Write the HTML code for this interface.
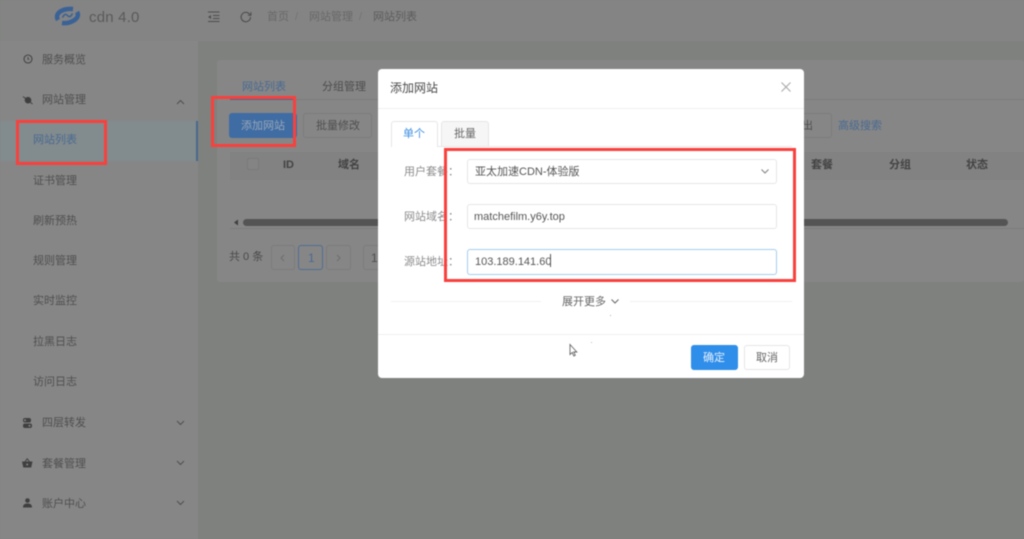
<!DOCTYPE html>
<html lang="zh-CN">
<head>
<meta charset="utf-8">
<title>添加网站</title>
<style>
html,body{margin:0;padding:0;width:1024px;height:539px;overflow:hidden;background:#7f817f}
body{font-family:"Liberation Sans","Noto Sans CJK SC",sans-serif;font-size:11px;color:#4a4a4a;position:relative}
#root{position:absolute;left:0;top:0;width:1024px;height:539px;filter:blur(.45px)}
.a{position:absolute;white-space:nowrap;line-height:1;margin-top:1px}
.n{margin-top:0}
.box{position:absolute;box-sizing:border-box}
.m{color:#4f4f4f;font-size:11px}
.r{position:absolute;box-sizing:border-box;border:3px solid #f9403d}
svg{position:absolute;overflow:visible}
</style>
</head>
<body>
<div id="root">
  <div class="box" style="left:0;top:0;width:1024px;height:41px;background:#848484"></div>
  <div class="box" style="left:0;top:41px;width:198px;height:498px;background:#868686"></div>
  <div class="box" style="left:198px;top:41px;width:826px;height:498px;background:#7f817f"></div>
  <div class="box" style="left:217px;top:60px;width:807px;height:222px;background:#868686;border-radius:3px"></div>

  <!-- logo -->
  <svg style="left:55px;top:6px" width="25" height="20" viewBox="0 0 25 20" fill="none" stroke="#3a6296">
    <path d="M3 14C-1 7 8 2 18 3" stroke-width="4.500"/>
    <path d="M22 6C26 12 16 18 7 17" stroke-width="4.500"/>
    <path d="M7.500 11.500q2.500-5 5-2t5-2" stroke-width="1.600"/>
  </svg>
  <div class="a n" style="left:89px;top:10px;font-size:15px;color:#5a5a5a;letter-spacing:.2px">cdn 4.0</div>

  <!-- header icons -->
  <svg style="left:208px;top:11px" width="12" height="12" viewBox="0 0 12 12" fill="none" stroke="#4d4d4d" stroke-width="1.1"><path d="M0 1h11.500M5 4.500h6.500M5 7.500h6.500M0 10.500h11.500"/><path d="M0 6l3-2v4z" fill="#4d4d4d" stroke="none"/></svg>
  <svg style="left:240px;top:11px" width="12" height="12" viewBox="0 0 12 12" fill="none" stroke="#4d4d4d" stroke-width="1.1"><path d="M10.500 6a4.700 4.700 0 1 1-1.400-3.300L11 4.300"/><path d="M11 1v3.300H7.800" stroke-width=".9"/></svg>
  <div class="a" style="left:267px;top:11px;font-size:11px;color:#686868">首页</div>
  <div class="a" style="left:295px;top:11px;font-size:11px;color:#747474">/</div>
  <div class="a" style="left:309px;top:11px;font-size:11px;color:#686868">网站管理</div>
  <div class="a" style="left:359px;top:11px;font-size:11px;color:#747474">/</div>
  <div class="a" style="left:373px;top:11px;font-size:11px;color:#5c5c5c">网站列表</div>

  <!-- sidebar -->
  <svg style="left:23px;top:54px" width="10" height="10" viewBox="0 0 10 10" fill="none" stroke="#434343" stroke-width="1.100"><circle cx="5" cy="5" r="4"/><path d="M5 3v2.300h1.300" stroke-width=".9"/></svg>
  <div class="a m" style="left:42px;top:54px">服务概览</div>
  <svg style="left:23px;top:95px" width="10" height="10" viewBox="0 0 10 10"><circle cx="5" cy="5.200" r="3.300" fill="#3f3f3f"/><path d="M0 1.500l9.500 7.500" stroke="#3f3f3f" stroke-width="1"/></svg>
  <div class="a m" style="left:42px;top:94px">网站管理</div>
  <svg style="left:176px;top:99px" width="9" height="6" viewBox="0 0 9 6" fill="none" stroke="#4f4f4f" stroke-width="1"><path d="M1 5l3.500-3.500L8 5"/></svg>

  <div class="box" style="left:0;top:121px;width:198px;height:40px;background:#828b8d"></div>
  <div class="box" style="left:196px;top:121px;width:2px;height:40px;background:#47688e"></div>
  <div class="a" style="left:33px;top:134px;font-size:11px;color:#4a6a92">网站列表</div>
  <div class="a m" style="left:33px;top:175px">证书管理</div>
  <div class="a m" style="left:33px;top:215px">刷新预热</div>
  <div class="a m" style="left:33px;top:255px">规则管理</div>
  <div class="a m" style="left:33px;top:295px">实时监控</div>
  <div class="a m" style="left:33px;top:336px">拉黑日志</div>
  <div class="a m" style="left:33px;top:376px">访问日志</div>

  <svg style="left:22px;top:418px" width="11" height="10" viewBox="0 0 11 10"><rect x="1" y="0" width="8" height="4.500" rx="2" fill="#404040"/><rect x="1" y="5.500" width="9" height="4.500" rx="2" fill="#404040"/><circle cx="3" cy="2.200" r="1" fill="#868686"/><circle cx="7.500" cy="7.700" r="1" fill="#868686"/></svg>
  <div class="a m" style="left:42px;top:417px">四层转发</div>
  <svg style="left:176px;top:420px" width="9" height="6" viewBox="0 0 9 6" fill="none" stroke="#4f4f4f" stroke-width="1"><path d="M1 1l3.500 3.500L8 1"/></svg>

  <svg style="left:22px;top:458px" width="11" height="10" viewBox="0 0 11 10"><path d="M0 3.500h10.500l-1.300 6H1.300z" fill="#3f3f3f"/><path d="M2.800 4L5.200 .8 7.700 4" fill="none" stroke="#3f3f3f" stroke-width="1"/><circle cx="5.200" cy="6.500" r="1" fill="#868686"/></svg>
  <div class="a m" style="left:42px;top:458px">套餐管理</div>
  <svg style="left:176px;top:460px" width="9" height="6" viewBox="0 0 9 6" fill="none" stroke="#4f4f4f" stroke-width="1"><path d="M1 1l3.500 3.500L8 1"/></svg>

  <svg style="left:23px;top:498px" width="9" height="10" viewBox="0 0 9 10" fill="#3f3f3f"><circle cx="4.500" cy="2.500" r="2.300"/><path d="M0 9.500c0-3 1.800-4 4.500-4s4.500 1 4.500 4z"/></svg>
  <div class="a m" style="left:42px;top:498px">账户中心</div>
  <svg style="left:176px;top:500px" width="9" height="6" viewBox="0 0 9 6" fill="none" stroke="#4f4f4f" stroke-width="1"><path d="M1 1l3.500 3.500L8 1"/></svg>

  <!-- content tabs -->
  <div class="a" style="left:242px;top:81px;font-size:11px;color:#4a6a92">网站列表</div>
  <div class="a" style="left:322px;top:81px;font-size:11px;color:#4c4c4c">分组管理</div>
  <div class="box" style="left:230px;top:99px;width:794px;height:1px;background:#7c7c7c"></div>
  <div class="box" style="left:230px;top:98px;width:66px;height:2px;background:#47688e"></div>

  <!-- action buttons -->
  <div class="box" style="left:229px;top:113px;width:68px;height:25px;background:#3f6ca3;border-radius:3px"></div>
  <div class="a" style="left:241px;top:120px;font-size:11px;color:#98a7b9">添加网站</div>
  <div class="box" style="left:303px;top:113px;width:69px;height:25px;border:1px solid #7c7c7c;border-radius:3px"></div>
  <div class="a" style="left:316px;top:120px;font-size:11px;color:#4f4f4f">批量修改</div>
  <div class="box" style="left:770px;top:113px;width:62px;height:25px;border:1px solid #7c7c7c;border-radius:3px"></div>
  <div class="a" style="left:802px;top:120px;font-size:11px;color:#4f4f4f">出</div>
  <div class="a" style="left:838px;top:120px;font-size:11px;color:#4a6a92">高级搜索</div>

  <!-- table header -->
  <div class="box" style="left:230px;top:152px;width:794px;height:28px;background:#828282"></div>
  <div class="box" style="left:247px;top:158px;width:12px;height:12px;border:1px solid #7a7a7a;background:#848484;border-radius:2px"></div>
  <div class="a" style="left:283px;top:159px;font-size:11px;font-weight:bold;color:#434343">ID</div>
  <div class="a" style="left:338px;top:159px;font-size:11px;font-weight:bold;color:#434343">域名</div>
  <div class="a" style="left:811px;top:159px;font-size:11px;font-weight:bold;color:#434343">套餐</div>
  <div class="a" style="left:889px;top:159px;font-size:11px;font-weight:bold;color:#434343">分组</div>
  <div class="a" style="left:966px;top:159px;font-size:11px;font-weight:bold;color:#434343">状态</div>

  <!-- scrollbar -->
  <svg style="left:234px;top:219px" width="5" height="7" viewBox="0 0 5 7"><path d="M0 3.500L4 .5v6z" fill="#3f3f3f"/></svg>
  <div class="box" style="left:243px;top:219px;width:765px;height:7px;background:#545454;border-radius:4px"></div>
  <div class="box" style="left:230px;top:228px;width:794px;height:1px;background:#7c7c7c"></div>

  <!-- pagination -->
  <div class="a" style="left:229px;top:251px;font-size:11px;color:#4a4a4a">共 0 条</div>
  <div class="box" style="left:271px;top:245px;width:24px;height:25px;border:1px solid #7c7c7c;border-radius:3px"></div>
  <svg style="left:280px;top:254px" width="5" height="8" viewBox="0 0 5 8" fill="none" stroke="#6e6e6e"><path d="M4 1L1 4l3 3"/></svg>
  <div class="box" style="left:298px;top:245px;width:25px;height:25px;border:1px solid #4f6e92;border-radius:3px"></div>
  <div class="a n" style="left:308px;top:252px;font-size:12px;color:#4a6a92">1</div>
  <div class="box" style="left:326px;top:245px;width:25px;height:25px;border:1px solid #7c7c7c;border-radius:3px"></div>
  <svg style="left:336px;top:254px" width="5" height="8" viewBox="0 0 5 8" fill="none" stroke="#6e6e6e"><path d="M1 1l3 3-3 3"/></svg>
  <div class="box" style="left:363px;top:245px;width:30px;height:25px;border:1px solid #7c7c7c;border-radius:3px"></div>
  <div class="a n" style="left:371px;top:252px;font-size:12px;color:#4f4f4f">10</div>

  <!-- modal -->
  <div class="box" style="left:378px;top:69px;width:426px;height:309px;background:#fff;border-radius:4px"></div>
  <div class="a n" style="left:390px;top:82px;font-size:12px;color:#4a4a4a">添加网站</div>
  <svg style="left:781px;top:82px" width="10" height="10" viewBox="0 0 10 10" stroke="#a9a9a9" stroke-width="1.100"><path d="M.5.500l9 9M9.500.500l-9 9"/></svg>
  <div class="box" style="left:378px;top:108px;width:426px;height:1px;background:#efefef"></div>

  <!-- modal tabs -->
  <div class="box" style="left:391px;top:146px;width:401px;height:1px;background:#e6e6e6"></div>
  <div class="box" style="left:391px;top:121px;width:47px;height:26px;background:#fff;border:1px solid #e6e6e6;border-bottom:0;border-radius:3px 3px 0 0"></div>
  <div class="a" style="left:403px;top:128px;font-size:11px;color:#3f8fe0">单个</div>
  <div class="box" style="left:441px;top:121px;width:48px;height:25px;background:#f6f6f6;border:1px solid #e6e6e6;border-bottom:0;border-radius:3px 3px 0 0"></div>
  <div class="a" style="left:454px;top:128px;font-size:11px;color:#666">批量</div>

  <!-- form -->
  <div class="a" style="left:404px;top:166px;font-size:11px;color:#8a8a8a">用户套餐：</div>
  <div class="box" style="left:467px;top:159px;width:310px;height:25px;border:1px solid #e6e6e6;border-radius:3px"></div>
  <div class="a" style="left:475px;top:166px;font-size:11px;color:#555">亚太加速CDN-体验版</div>
  <svg style="left:761px;top:169px" width="8" height="5" viewBox="0 0 8 5" fill="none" stroke="#808080" stroke-width="1"><path d="M.5.500L4 4 7.500.500"/></svg>

  <div class="a" style="left:404px;top:211px;font-size:11px;color:#8a8a8a">网站域名：</div>
  <div class="box" style="left:467px;top:204px;width:310px;height:25px;border:1px solid #e6e6e6;border-radius:3px"></div>
  <div class="a" style="left:474px;top:211px;font-size:11px;color:#555">matchefilm.y6y.top</div>

  <div class="a" style="left:404px;top:256px;font-size:11px;color:#8a8a8a">源站地址：</div>
  <div class="box" style="left:467px;top:249px;width:310px;height:26px;border:1.500px solid #a5cbef;border-radius:3px"></div>
  <div class="a" style="left:475px;top:256px;font-size:11px;color:#555">103.189.141.60</div>
  <div class="box" style="left:550px;top:254px;width:1px;height:13px;background:#555"></div>

  <!-- expand -->
  <div class="box" style="left:391px;top:301px;width:150px;height:1px;background:#f1f1f1"></div>
  <div class="box" style="left:630px;top:301px;width:162px;height:1px;background:#f1f1f1"></div>
  <div class="a" style="left:562px;top:296px;font-size:11px;color:#666">展开更多</div>
  <svg style="left:611px;top:299px" width="8" height="5" viewBox="0 0 8 5" fill="none" stroke="#666" stroke-width="1"><path d="M.5.500L4 4 7.500.500"/></svg>
  <div class="box" style="left:610px;top:315px;width:1px;height:1px;background:#aaa"></div>
  <div class="box" style="left:591px;top:342px;width:1px;height:1px;background:#bbb"></div>

  <!-- footer -->
  <div class="box" style="left:378px;top:334px;width:426px;height:1px;background:#f0f0f0"></div>
  <svg style="left:569px;top:344px" width="9" height="13" viewBox="0 0 9 13"><path d="M1 .5v10l2.300-2 1.500 3.500 1.500-.7-1.500-3.300h3z" fill="#fff" stroke="#666" stroke-width=".9"/></svg>
  <div class="box" style="left:691px;top:345px;width:47px;height:25px;background:#2f8eea;border-radius:3px"></div>
  <div class="a" style="left:703px;top:352px;font-size:11px;color:#e6f1fc">确定</div>
  <div class="box" style="left:744px;top:345px;width:46px;height:25px;background:#fff;border:1px solid #e6e6e6;border-radius:3px"></div>
  <div class="a" style="left:756px;top:352px;font-size:11px;color:#666">取消</div>

  <!-- red annotation boxes -->
  <div class="r" style="left:16px;top:120px;width:91px;height:45px"></div>
  <div class="r" style="left:211px;top:96px;width:85px;height:51px"></div>
  <div class="r" style="left:444px;top:148px;width:352px;height:134px"></div>
</div>
</body>
</html>
